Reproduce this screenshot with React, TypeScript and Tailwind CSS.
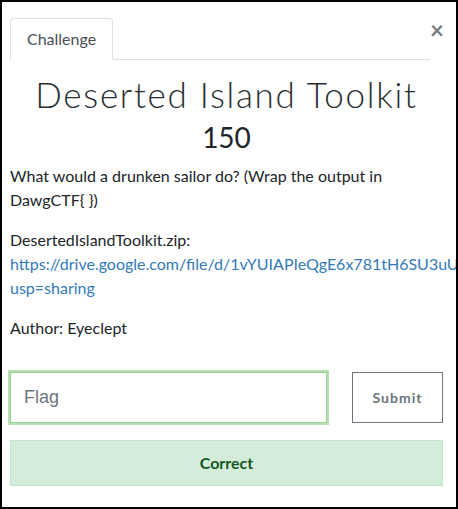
import React from 'react'

// Challenge modal: tab header, title/points, description, flag form and result alert
export default function App(): React.JSX.Element {
  return (
    <div className="w-[458px] h-[509px] bg-white font-['Lato','Noto_Sans',sans-serif]">
      <div className="w-[458px] h-[509px] border-2 border-black overflow-hidden bg-white pt-4 pl-2 pr-[13px] text-[#212529]">
        {/* Tabs + close */}
        <div className="flex items-start">
          <ul className="flex flex-1 border-b border-[#dee2e6]">
            <li className="-mb-px">
              <span className="block border border-[#dee2e6] border-b-white rounded-t-[4px] px-4 py-2 text-base leading-6 text-[#495057] bg-white">
                Challenge
              </span>
            </li>
          </ul>
          <button
            type="button"
            aria-label="Close"
            className="w-[13px] text-center text-[24px] font-bold leading-none text-[#7b7b7b]"
          >
            ×
          </button>
        </div>

        {/* Title and points */}
        <h2 className="mt-[13px] text-center text-[35px] font-light leading-[1.2] tracking-[1.7px] text-[#2a2d30]">
          Deserted Island Toolkit
        </h2>
        <h4 className="mt-[6px] text-center text-[28px] font-normal leading-[1.2] text-[#212529]">150</h4>

        {/* Description */}
        <div className="mt-[9px] text-base leading-6">
          <p className="mb-4">What would a drunken sailor do? (Wrap the output in DawgCTF{'{ }'})</p>
          <p className="mb-4">
            DesertedIslandToolkit.zip:
            <br />
            <a className="block whitespace-nowrap text-[#337ab7]">
              https://drive.google.com/file/d/1vYUIAPIeQgE6x781tH6SU3uU/view?
            </a>
            <a className="text-[#337ab7]">usp=sharing</a>
          </p>
          <p>Author: Eyeclept</p>
        </div>

        {/* Flag form */}
        <div className="mt-8 flex">
          <input
            type="text"
            placeholder="Flag"
            className="flex-1 min-w-0 h-[51px] border border-[#98cf92] shadow-[0_0_0_2px_#b6e0b1] pl-[13px] text-[18px] font-['Liberation_Sans',Arial,sans-serif] text-[#495057] placeholder:text-[#6c757d] outline-none"
          />
          <button
            type="button"
            className="ml-[25px] w-[91px] h-[51px] border border-[#6c757d] text-[14px] font-bold tracking-[1px] text-[#6c757d] bg-white"
          >
            Submit
          </button>
        </div>

        {/* Result */}
        <div className="mt-[17px] h-[46px] flex items-center justify-center border border-[#c3e6cb] bg-[#d4edda] text-base font-bold text-[#155724]">
          Correct
        </div>
      </div>
    </div>
  )
}
